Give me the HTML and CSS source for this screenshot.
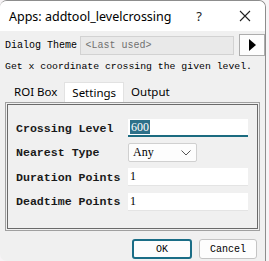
FILE: index.html
```
<!DOCTYPE html>
<html lang="en">
<head>
  <meta charset="UTF-8">
  <title>Apps: addtool_levelcrossing</title>
  <link rel="stylesheet" href="styles.css">
</head>
<body>
  <div class="window">
    <!-- Title bar -->
    <div class="titlebar">
      <span class="title">Apps: addtool_levelcrossing</span>
      <span class="title-help">?</span>
      <svg class="title-close" width="12" height="12" viewBox="0 0 12 12">
        <path d="M1 1 L11 11 M11 1 L1 11" stroke="#222" stroke-width="1.1" fill="none"/>
      </svg>
    </div>

    <div class="dlg-body">
      <!-- Theme row -->
      <div class="theme-row">
        <span class="theme-label">Dialog Theme</span>
        <div class="theme-combo">&lt;Last used&gt;</div>
        <div class="theme-arrow">
          <svg width="8" height="12" viewBox="0 0 8 12"><path d="M1 0 L8 6 L1 12 Z" fill="#000"/></svg>
        </div>
      </div>
      <div class="desc">Get x coordinate crossing the given level.</div>

      <!-- Tabs -->
      <div class="tabs">
        <div class="tab">ROI Box</div>
        <div class="tab tab-active">Settings</div>
        <div class="tab">Output</div>
      </div>
      <div class="panel">
        <div class="panel-inner">
          <div class="field">
            <span class="field-label">Crossing Level</span>
            <div class="field-input field-focus"><span class="sel">600</span></div>
          </div>
          <div class="field">
            <span class="field-label">Nearest Type</span>
            <div class="field-select">
              <span>Any</span>
              <svg width="10" height="6" viewBox="0 0 10 6"><path d="M0.5 0.5 L5 5 L9.5 0.5" stroke="#555" stroke-width="1" fill="none"/></svg>
            </div>
          </div>
          <div class="field">
            <span class="field-label">Duration Points</span>
            <div class="field-input">1</div>
          </div>
          <div class="field">
            <span class="field-label">Deadtime Points</span>
            <div class="field-input">1</div>
          </div>
        </div>
      </div>

      <!-- Buttons -->
      <div class="buttons">
        <div class="btn btn-default">OK</div>
        <div class="btn">Cancel</div>
      </div>
    </div>
  </div>
</body>
</html>
```

FILE: styles.css
```
body {
  margin: 0;
  background: #f7f4f6;
  width: 269px;
  height: 261px;
  overflow: hidden;
}
.window {
  width: 266px;
  height: 261px;
  background: #f0f0f0;
  border-top: 1px solid #8d8d8d;
  border-right: 1px solid #8d8d8d;
  border-radius: 7px 7px 0 7px;
  box-sizing: border-box;
  overflow: hidden;
}
.titlebar {
  height: 30px;
  background: #fff;
  display: flex;
  align-items: center;
  font-family: "Noto Sans", sans-serif;
}
.title {
  margin-left: 9px;
  font-size: 12.5px;
  color: #000;
  flex: 1;
}
.title-help {
  font-size: 13px;
  margin-right: 37px;
  color: #222;
}
.title-close {
  margin-right: 14px;
}
.dlg-body {
  padding: 3px 0 0 0;
}
.theme-row {
  display: flex;
  align-items: center;
  height: 22px;
}
.theme-label {
  margin-left: 5px;
  width: 76px;
  font-family: "Liberation Mono", monospace;
  font-size: 10px;
  color: #000;
}
.theme-combo {
  width: 155px;
  height: 19px;
  box-sizing: border-box;
  border: 1px solid #d2d2d2;
  background: #e9e9e9;
  font-family: "Liberation Mono", monospace;
  font-size: 10px;
  color: #707070;
  display: flex;
  align-items: center;
  padding-left: 4px;
}
.theme-arrow {
  margin-left: 5px;
  width: 26px;
  height: 22px;
  box-sizing: border-box;
  border: 1px solid #adadad;
  background: #fdfdfd;
  display: flex;
  align-items: center;
  justify-content: center;
}
.desc {
  margin: 5px 0 0 5px;
  font-family: "Liberation Mono", monospace;
  font-size: 9.8px;
  color: #000;
  height: 13px;
}
.tabs {
  display: flex;
  margin: 8px 0 0 7px;
  height: 20px;
  font-family: "Noto Sans", sans-serif;
  font-size: 11.5px;
}
.tab {
  padding: 0 7px;
  line-height: 18px;
  margin-top: 1px;
}
.tab-active {
  background: #fff;
  margin-top: 0;
  line-height: 20px;
  border: 1px solid #e2e2e2;
  border-bottom: none;
}
.panel {
  margin: 0 5px 0 5px;
  border: 1px solid #a0a0a0;
  padding: 1px;
  height: 129px;
  box-sizing: border-box;
}
.panel-inner {
  border: 1px solid #6a6a6a;
  height: 100%;
  box-sizing: border-box;
  padding: 14px 0 0 8px;
  display: flex;
  flex-direction: column;
  gap: 6.5px;
}
.field {
  display: flex;
  align-items: center;
  height: 18px;
}
.field-label {
  width: 112px;
  font-family: "Liberation Mono", monospace;
  font-weight: bold;
  font-size: 11.6px;
  color: #1a1a1a;
}
.field-input {
  width: 120px;
  height: 18px;
  box-sizing: border-box;
  background: #fff;
  border-bottom: 1px solid #e4e4e4;
  font-family: "Liberation Serif", serif;
  font-size: 12px;
  padding-left: 2px;
  display: flex;
  align-items: center;
}
.field-focus {
  border-bottom: 2px solid #1b6b80;
}
.sel {
  background: #2d7089;
  color: #fff;
  padding: 0 1px;
  line-height: 14px;
}
.field-select {
  width: 69px;
  height: 19px;
  box-sizing: border-box;
  background: #fdfdfd;
  border: 1px solid #d0d0d0;
  border-radius: 2px;
  font-family: "Liberation Serif", serif;
  font-size: 12px;
  display: flex;
  align-items: center;
  justify-content: space-between;
  padding: 0 5px 0 4px;
}
.buttons {
  display: flex;
  justify-content: flex-end;
  gap: 7px;
  margin: 8px 8px 0 0;
}
.btn {
  width: 58px;
  height: 20px;
  box-sizing: border-box;
  border: 1px solid #c4c4c4;
  border-radius: 3px;
  background: #fdfdfd;
  font-family: "Liberation Mono", monospace;
  font-size: 10px;
  display: flex;
  align-items: center;
  justify-content: center;
}
.btn-default {
  width: 60px;
  border: 2px solid #1a6d86;
}
```
